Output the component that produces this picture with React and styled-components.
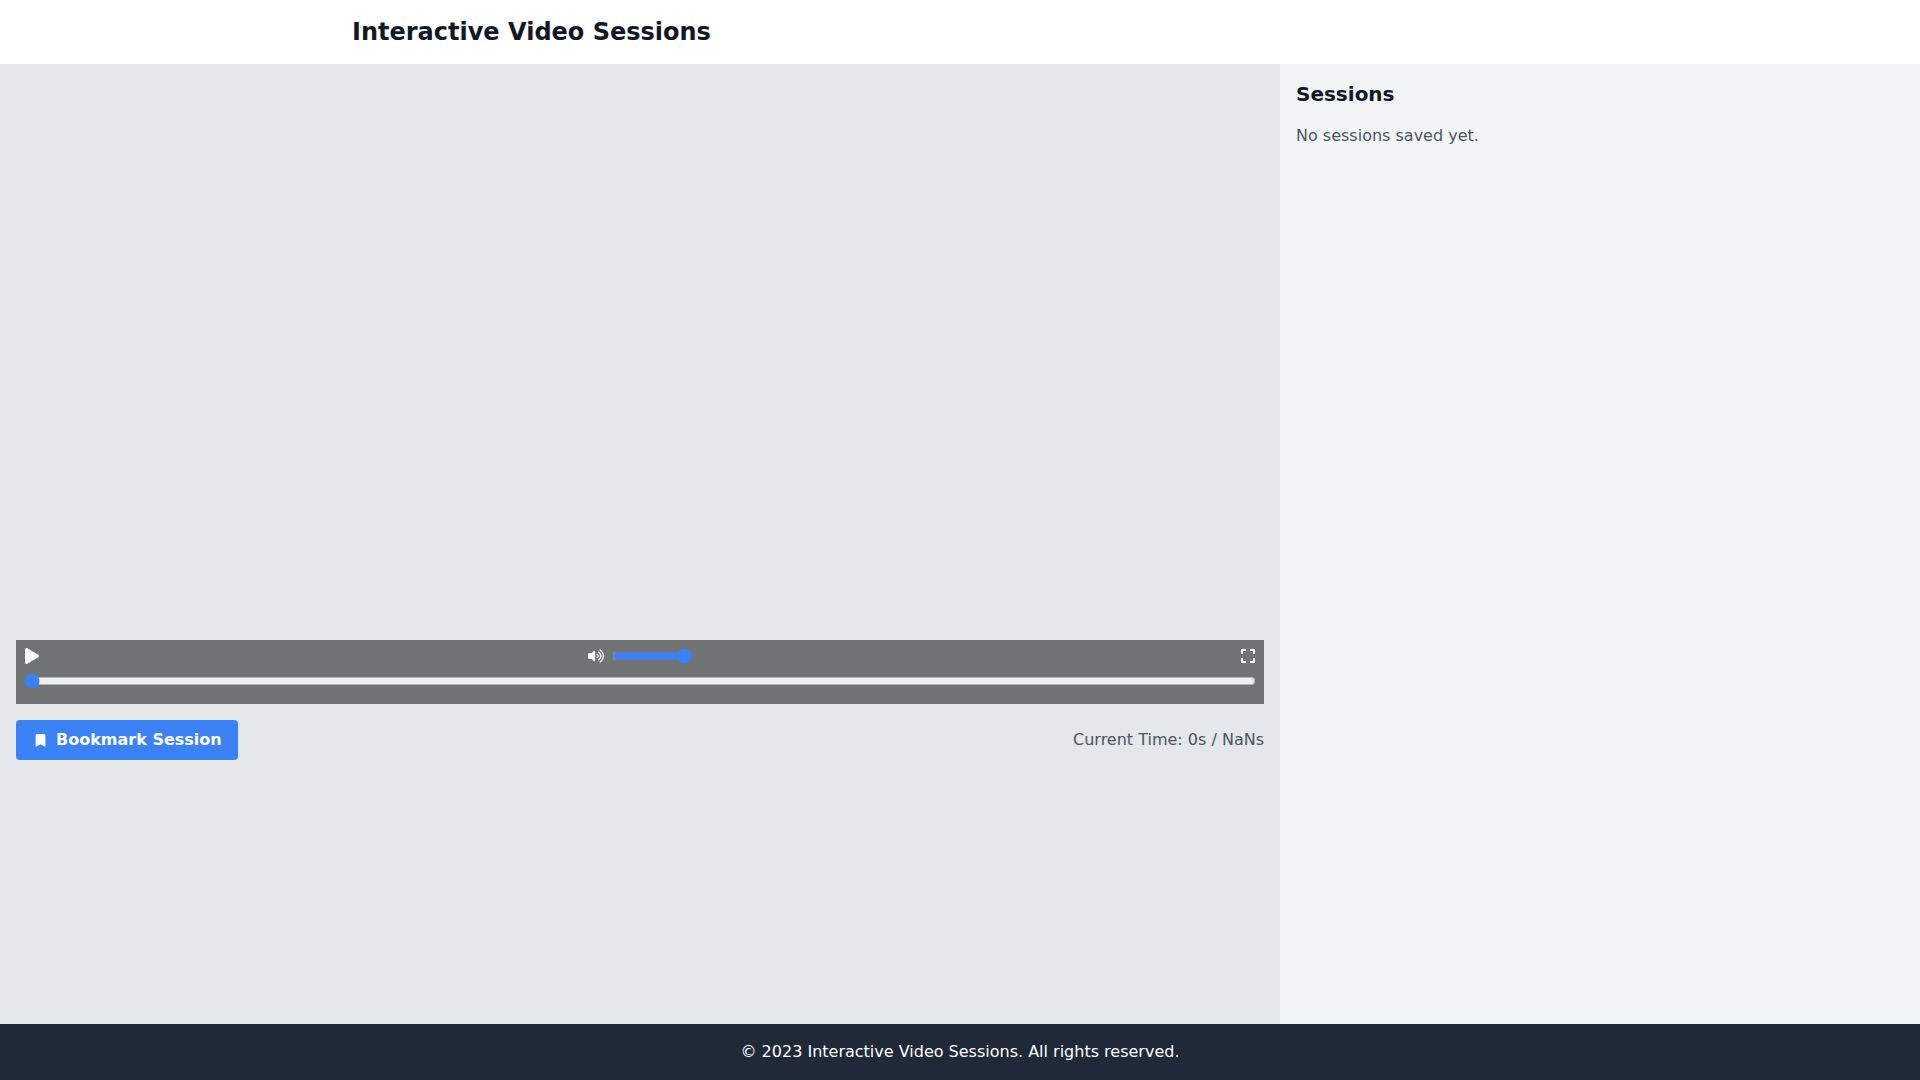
import React from "react";
import styled, { createGlobalStyle } from "styled-components";
import { FaBookmark, FaExpand, FaPlay, FaVolumeUp } from "react-icons/fa";

const GlobalStyle = createGlobalStyle`
  * { box-sizing: border-box; }
  html, body { margin: 0; padding: 0; }
  body { font-family: "DejaVu Sans", sans-serif; }
`;

const Page = styled.div`
  display: flex;
  flex-direction: column;
  height: 100vh;
  background: #f3f4f6;
`;

const Header = styled.header`
  height: 64px;
  flex-shrink: 0;
  background: #ffffff;
  padding: 16px 32px;
  width: 100%;
`;

const HeaderInner = styled.div`
  width: 1280px;
  margin: 0 auto;
  padding: 0 32px;
`;

const Title = styled.h1`
  margin: 0;
  font-size: 24px;
  line-height: 32px;
  font-weight: 700;
  color: #111827;
`;

const Main = styled.main`
  flex: 1;
  display: flex;
  min-height: 0;
`;

const Stage = styled.section`
  width: 1280px;
  background: #e5e7eb;
  padding: 16px;
`;

const Video = styled.div`
  position: relative;
  height: 624px;
`;

const Controls = styled.div`
  position: absolute;
  left: 0;
  right: 0;
  bottom: 0;
  height: 64px;
  padding: 8px;
  display: flex;
  flex-direction: column;
  gap: 9px;
  background: rgba(0, 0, 0, 0.5);
  color: #ffffff;
`;

const ControlRow = styled.div`
  display: flex;
  align-items: center;
  justify-content: space-between;
  height: 16px;
`;

const IconButton = styled.button`
  display: flex;
  align-items: center;
  padding: 0;
  border: 0;
  background: none;
  color: #ffffff;
  font-size: 16px;
`;

const VolumeGroup = styled.div`
  display: flex;
  align-items: center;
  gap: 8px;
`;

const Range = styled.input.attrs({ type: "range" })`
  margin: 0;
  display: block;
  accent-color: #3b82f6;
  width: ${(p) => p.$width || "100%"};
`;

const ActionRow = styled.div`
  display: flex;
  align-items: center;
  justify-content: space-between;
  margin-top: 16px;
`;

const BookmarkButton = styled.button`
  display: flex;
  align-items: center;
  gap: 8px;
  height: 40px;
  padding: 0 16px;
  border: 0;
  border-radius: 4px;
  background: #3b82f6;
  color: #ffffff;
  font-family: inherit;
  font-size: 16px;
  line-height: 24px;
  font-weight: 700;
`;

const BookmarkIcon = styled.span`
  display: flex;
  justify-content: center;
  width: 16px;
  font-size: 13px;
`;

const TimeText = styled.span`
  font-size: 16px;
  line-height: 24px;
  color: #4b5563;
`;

const Sidebar = styled.aside`
  flex: 1;
  background: #f3f4f6;
  padding: 16px;
`;

const SidebarTitle = styled.h2`
  margin: 0 0 16px;
  font-size: 20px;
  line-height: 28px;
  font-weight: 700;
  color: #111827;
`;

const EmptyText = styled.p`
  margin: 0;
  font-size: 16px;
  line-height: 24px;
  color: #4b5563;
`;

const Footer = styled.footer`
  height: 56px;
  flex-shrink: 0;
  padding: 16px;
  text-align: center;
  background: #1f2937;
  color: #ffffff;
  font-size: 16px;
  line-height: 24px;
`;

export default function App() {
  return (
    <Page>
      <GlobalStyle />
      <Header>
        <HeaderInner>
          <Title>Interactive Video Sessions</Title>
        </HeaderInner>
      </Header>
      <Main>
        <Stage>
          <Video>
            <Controls>
              <ControlRow>
                <IconButton>
                  <FaPlay />
                </IconButton>
                <VolumeGroup>
                  <IconButton>
                    <FaVolumeUp />
                  </IconButton>
                  <Range $width="80px" min="0" max="1" step="0.1" defaultValue="1" />
                </VolumeGroup>
                <IconButton>
                  <FaExpand />
                </IconButton>
              </ControlRow>
              <Range min="0" max="100" defaultValue="0" />
            </Controls>
          </Video>
          <ActionRow>
            <BookmarkButton>
              <BookmarkIcon>
                <FaBookmark />
              </BookmarkIcon>
              Bookmark Session
            </BookmarkButton>
            <TimeText>Current Time: 0s / NaNs</TimeText>
          </ActionRow>
        </Stage>
        <Sidebar>
          <SidebarTitle>Sessions</SidebarTitle>
          <EmptyText>No sessions saved yet.</EmptyText>
        </Sidebar>
      </Main>
      <Footer>© 2023 Interactive Video Sessions. All rights reserved.</Footer>
    </Page>
  );
}
